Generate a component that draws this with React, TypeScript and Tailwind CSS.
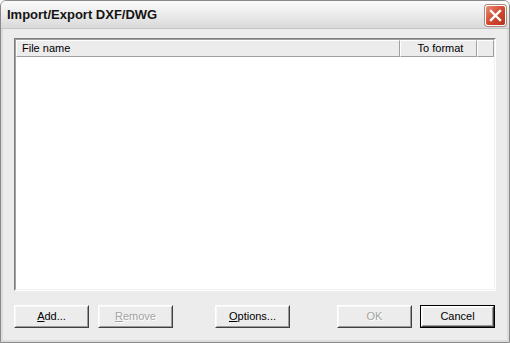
import React from 'react'

const font = { fontFamily: '"Liberation Sans", Arial, sans-serif' }

function Btn({ label, u, rest, disabled, isDefault, className = '' }: { label?: string; u?: string; rest?: string; disabled?: boolean; isDefault?: boolean; className?: string }) {
  const text = (
    <span className={disabled ? 'text-[#a3a3a3] [text-shadow:1px_1px_0_#ffffff]' : 'text-black'}>
      {u && <span className="underline underline-offset-1">{u}</span>}
      {rest ?? label}
    </span>
  )
  return (
    <div className={`w-[75px] h-[23px] shrink-0 ${isDefault ? 'border border-black' : ''} ${className}`}>
      <div className="w-full h-full border border-t-white border-l-white border-b-[#404040] border-r-[#404040]">
        <div className="w-full h-full bg-[#ececec] border border-t-[#f7f7f7] border-l-[#f7f7f7] border-b-[#9a9a9a] border-r-[#9a9a9a] flex items-center justify-center text-[11px] leading-none">
          {text}
        </div>
      </div>
    </div>
  )
}

export default function App() {
  return (
    <div className="w-[510px] h-[343px] bg-white" style={font}>
      <div className="w-full h-full flex flex-col border border-[#8a8a8a] rounded-t-[6px] overflow-hidden bg-[#ececec]">
        {/* Title bar */}
        <div className="h-[28px] shrink-0 flex items-center justify-between pl-[6px] pr-[3px] pt-[1px] bg-gradient-to-b from-[#fbfbfb] via-[#ebebeb] to-[#d9d9d9] border-b border-[#c4c4c4]">
          <span className="text-[13px] font-bold text-[#141414]">Import/Export DXF/DWG</span>
          <div className="w-[21px] h-[21px] rounded-[3px] border border-white bg-gradient-to-br from-[#e98a73] via-[#d24a32] to-[#b8311c] flex items-center justify-center shadow-[0_0_0_1px_#a88a80]">
            <svg width="13" height="13" viewBox="0 0 13 13">
              <path d="M2 2 L11 11 M11 2 L2 11" stroke="white" strokeWidth="2.4" strokeLinecap="square" />
            </svg>
          </div>
        </div>
        {/* Client */}
        <div className="flex-1 flex flex-col border-x-2 border-b-2 border-[#dcdcdc] pt-[9px] pl-[11px] pr-[11px] pb-[10px]">
          <div className="h-[253px] shrink-0 border border-t-[#808080] border-l-[#808080] border-b-white border-r-white">
            <div className="w-full h-full border border-t-[#a0a0a0] border-l-[#a0a0a0] border-b-[#f0f0f0] border-r-[#f0f0f0] bg-white flex flex-col">
              <div className="h-[17px] flex text-[11px] text-black bg-[#ececec]">
                <div className="w-[384px] border border-t-white border-l-white border-b-[#a0a0a0] border-r-[#a0a0a0] flex items-center pl-[5px]">File name</div>
                <div className="w-[77px] border border-t-white border-l-white border-b-[#a0a0a0] border-r-[#a0a0a0] flex items-center justify-center pl-[4px]">To format</div>
                <div className="flex-1 border border-t-white border-l-white border-b-[#a0a0a0] border-r-[#a0a0a0]" />
              </div>
            </div>
          </div>
          <div className="flex mt-[14px]">
            <Btn u="A" rest="dd..." />
            <Btn u="R" rest="emove" disabled className="ml-[9px]" />
            <Btn u="O" rest="ptions..." className="ml-[42px]" />
            <Btn label="OK" disabled className="ml-[47px]" />
            <Btn label="Cancel" isDefault className="ml-[8px]" />
          </div>
        </div>
      </div>
    </div>
  )
}
